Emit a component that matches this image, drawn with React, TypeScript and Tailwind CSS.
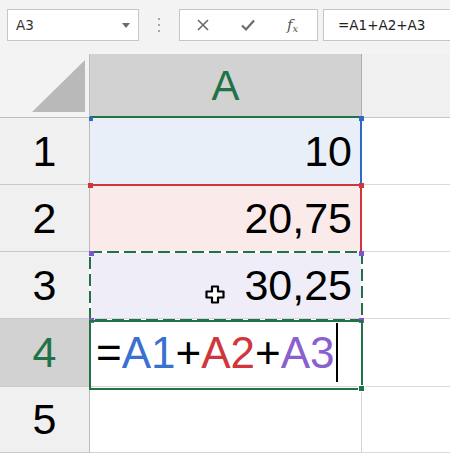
import React from 'react';

const CELL_FONT = { fontFamily: '"Liberation Sans", Arial, sans-serif' };
const UI_FONT = { fontFamily: '"DejaVu Sans", "Liberation Sans", sans-serif' };

const ROWS = [
  { n: 1, value: '10', bg: 'bg-[#e9eff9]' },
  { n: 2, value: '20,75', bg: 'bg-[#fbeaea]' },
  { n: 3, value: '30,25', bg: 'bg-[#efedf7]' },
  { n: 4, value: '', bg: 'bg-white' },
  { n: 5, value: '', bg: 'bg-white' },
];

function TopBar() {
  return (
    <div className="h-[54px] bg-[#f3f3f3] flex items-start pt-[9px] pl-[7px]" style={UI_FONT}>
      {/* Name box */}
      <div className="w-[132px] h-[32px] bg-white border border-[#c6c6c6] flex items-center justify-between pl-[8px] pr-[8px]">
        <span className="text-[13.5px] text-[#333]">A3</span>
        <svg width="8" height="5" viewBox="0 0 8 5">
          <polygon points="0,0 8,0 4,5" fill="#6b6b6b" />
        </svg>
      </div>
      {/* Grip dots */}
      <div className="w-[40px] h-[32px] flex flex-col items-center justify-center gap-[4px]">
        <span className="w-[2px] h-[2px] bg-[#a6a6a6]" />
        <span className="w-[2px] h-[2px] bg-[#a6a6a6]" />
        <span className="w-[2px] h-[2px] bg-[#a6a6a6]" />
      </div>
      {/* Cancel / enter / fx */}
      <div className="w-[139px] h-[32px] bg-white border border-[#c6c6c6] flex">
        <div className="w-[45px] flex items-center justify-center">
          <svg width="14" height="14" viewBox="0 0 14 14">
            <path d="M2 2 L12 12 M12 2 L2 12" stroke="#6a6a6a" strokeWidth="1.6" />
          </svg>
        </div>
        <div className="w-[45px] flex items-center justify-center">
          <svg width="16" height="14" viewBox="0 0 16 14">
            <path d="M2 7.5 L6 11.5 L14 2.5" stroke="#6a6a6a" strokeWidth="2.2" fill="none" />
          </svg>
        </div>
        <div className="w-[45px] flex items-center justify-center">
          <span
            className="italic text-[#555] text-[15px] leading-none"
            style={{ fontFamily: '"DejaVu Serif", "Liberation Serif", serif' }}
          >
            f<span className="text-[10px] relative top-[2px]">x</span>
          </span>
        </div>
      </div>
      {/* Formula box */}
      <div className="flex-1 ml-[5px] h-[32px] bg-white border border-r-0 border-[#c6c6c6] flex items-center pl-[14px]">
        <span className="text-[13.5px] text-[#222]">=A1+A2+A3</span>
      </div>
    </div>
  );
}

function Sheet() {
  return (
    <div className="relative grid grid-cols-[90px_272px_1fr] grid-rows-[64px_67px_67px_67px_68px_1fr] h-[399px]" style={CELL_FONT}>
      {/* Header row */}
      <div className="bg-[#f3f3f3] border-r border-b border-[#bdbdbd] flex items-end justify-end pr-[4px] pb-[5px]">
        <svg width="53" height="52" viewBox="0 0 53 52">
          <polygon points="53,0 53,52 0,52" fill="#b9b9b9" />
        </svg>
      </div>
      <div className="bg-[#d2d2d2] border-r border-r-[#ababab] border-b-2 border-b-[#217346] flex items-center justify-center text-[42px] text-[#217346]">
        A
      </div>
      <div className="bg-[#f0f0f0] border-b border-[#c6c6c6]" />

      {ROWS.map((r) => (
        <React.Fragment key={r.n}>
          <div
            className={`border-r border-r-[#bdbdbd] border-b border-b-[#c9c9c9] flex items-center justify-center text-[43px] ${
              r.n === 4 ? 'bg-[#d2d2d2] text-[#217346]' : 'bg-[#f0f0f0] text-black'
            }`}
          >
            {r.n}
          </div>
          <div
            className={`${r.bg} border-r border-b border-[#d4d4d4] flex items-center text-black ${
              r.n === 4 ? 'justify-start pl-[6px] text-[44px]' : 'justify-end pr-[9px] text-[43px]'
            }`}
          >
            {r.n === 4 ? (
              <>
                <span>=</span>
                <span className="text-[#3a70d0]">A1</span>
                <span>+</span>
                <span className="text-[#d0363b]">A2</span>
                <span>+</span>
                <span className="text-[#8a60cf]">A3</span>
                <span className="inline-block w-[2px] h-[59px] bg-black ml-[1px]" />
              </>
            ) : (
              r.value
            )}
          </div>
          <div className="bg-white border-b border-[#dadada]" />
        </React.Fragment>
      ))}

      {/* A1 reference (blue) */}
      <div className="absolute left-[360px] top-[64px] w-[2px] h-[67px] bg-[#2f68c7]" />
      <div className="absolute left-[89px] top-[63px] w-[4px] h-[4px] bg-[#2f68c7]" />
      <div className="absolute left-[359px] top-[62px] w-[5px] h-[5px] bg-[#2f68c7]" />

      {/* A2 reference (red) */}
      <div className="absolute left-[90px] top-[130px] w-[272px] h-[2px] bg-[#d0363b]" />
      <div className="absolute left-[360px] top-[131px] w-[2px] h-[67px] bg-[#d0363b]" />
      <div className="absolute left-[88px] top-[129px] w-[5px] h-[5px] bg-[#d0363b]" />
      <div className="absolute left-[359px] top-[129px] w-[5px] h-[5px] bg-[#d0363b]" />

      {/* A3 reference (purple) with copy marquee */}
      <svg className="absolute left-[89px] top-[197px]" width="274" height="70" viewBox="0 0 274 70">
        <rect x="1" y="1" width="272" height="68" fill="none" stroke="#ffffff" strokeWidth="2" />
        <rect x="1" y="1" width="272" height="68" fill="none" stroke="#217346" strokeWidth="2" strokeDasharray="12 5" />
      </svg>
      <div className="absolute left-[89px] top-[197px] w-[5px] h-[5px] bg-[#7b57c7]" />
      <div className="absolute left-[359px] top-[197px] w-[5px] h-[5px] bg-[#7b57c7]" />
      <div className="absolute left-[89px] top-[264px] w-[5px] h-[5px] bg-[#7b57c7]" />
      <div className="absolute left-[359px] top-[264px] w-[5px] h-[5px] bg-[#7b57c7]" />

      {/* Mouse cursor */}
      <svg className="absolute left-[205px] top-[231px]" width="20" height="19" viewBox="0 0 20 19">
        <path
          d="M7 1.5 H13 V6.5 H18.5 V12.5 H13 V17.5 H7 V12.5 H1.5 V6.5 H7 Z"
          fill="#ffffff"
          stroke="#000000"
          strokeWidth="2.2"
          strokeLinejoin="round"
        />
      </svg>

      {/* Active cell A4 */}
      <div className="absolute left-[89px] top-[266px] w-[274px] h-[70px] border-2 border-[#217346]" />
      <div className="absolute left-[358px] top-[331px] w-[7px] h-[7px] bg-[#217346] border border-white" />
    </div>
  );
}

export default function App() {
  return (
    <div className="w-[450px] h-[453px] overflow-hidden bg-white">
      <TopBar />
      <Sheet />
    </div>
  );
}
